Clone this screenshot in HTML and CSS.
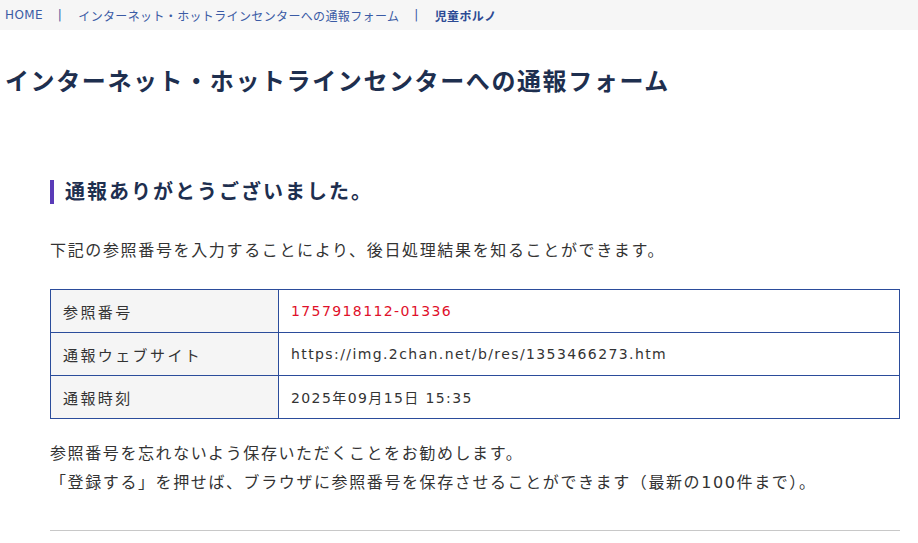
FILE: index.html
```html
<!DOCTYPE html>
<html lang="ja">
<head>
    <meta charset="UTF-8">
    <meta name="viewport" content="width=device-width, initial-scale=1.0">
    <title>インターネット・ホットラインセンターへの通報フォーム</title>
    <link rel="stylesheet" href="styles.css">
</head>
<body>
    <nav class="breadcrumb">
        <a href="#">HOME</a>
        <span class="sep">|</span>
        <a href="#">インターネット・ホットラインセンターへの通報フォーム</a>
        <span class="sep">|</span>
        <strong>児童ポルノ</strong>
    </nav>
    <h1 class="page-title">インターネット・ホットラインセンターへの通報フォーム</h1>
    <main class="content">
        <h2 class="section-title">通報ありがとうございました。</h2>
        <p class="lead">下記の参照番号を入力することにより、後日処理結果を知ることができます。</p>
        <table class="info-table">
            <tr>
                <th>参照番号</th>
                <td class="ref-no">1757918112-01336</td>
            </tr>
            <tr>
                <th>通報ウェブサイト</th>
                <td>https://img.2chan.net/b/res/1353466273.htm</td>
            </tr>
            <tr>
                <th>通報時刻</th>
                <td>2025年09月15日 15:35</td>
            </tr>
        </table>
        <p class="note">参照番号を忘れないよう保存いただくことをお勧めします。<br>「登録する」を押せば、ブラウザに参照番号を保存させることができます（最新の100件まで）。</p>
        <hr class="divider">
    </main>
</body>
</html>
```

FILE: styles.css
```css
* {
    margin: 0;
    padding: 0;
    box-sizing: border-box;
}
body {
    font-family: "DejaVu Sans", "Noto Sans CJK JP", sans-serif;
    color: #333;
    background: white;
}
.breadcrumb {
    background: #f6f6f6;
    height: 30px;
    padding: 0 5px;
    display: flex;
    align-items: center;
    font-size: 12px;
    letter-spacing: 0.03em;
    color: #3b5ba5;
}
.breadcrumb a {
    color: #3b5ba5;
    text-decoration: none;
}
.breadcrumb .sep {
    margin: 0 16px 0 15px;
}
.breadcrumb strong {
    color: #2c4a94;
}
.page-title {
    font-size: 24px;
    letter-spacing: 1.6px;
    color: #1e2f4f;
    padding: 0 5px;
    margin-top: 36px;
    line-height: 32px;
}
.content {
    margin: 82px 18px 0 50px;
}
.section-title {
    font-size: 20px;
    letter-spacing: 2px;
    color: #1e2f4f;
    border-left: 4px solid #5a3bb8;
    padding-left: 11px;
    line-height: 24px;
}
.lead {
    font-size: 16px;
    letter-spacing: 1.65px;
    margin-top: 35px;
    line-height: 24px;
}
.info-table {
    width: 100%;
    border-collapse: collapse;
    margin-top: 26px;
    font-size: 15px;
    letter-spacing: 2.4px;
}
.info-table th,
.info-table td {
    border: 1px solid #2b4c9b;
    height: 43px;
    padding: 0 12px;
    text-align: left;
    font-weight: normal;
}
.info-table th {
    width: 228px;
    background: #f5f5f5;
}
.info-table td {
    font-size: 14px;
    letter-spacing: 1.4px;
}
.ref-no {
    color: #e0102a;
}
.note {
    font-size: 16px;
    letter-spacing: 1.6px;
    line-height: 29px;
    margin-top: 20px;
}
.divider {
    border: none;
    border-top: 1px solid #c8c8c8;
    margin-top: 33px;
}
```
